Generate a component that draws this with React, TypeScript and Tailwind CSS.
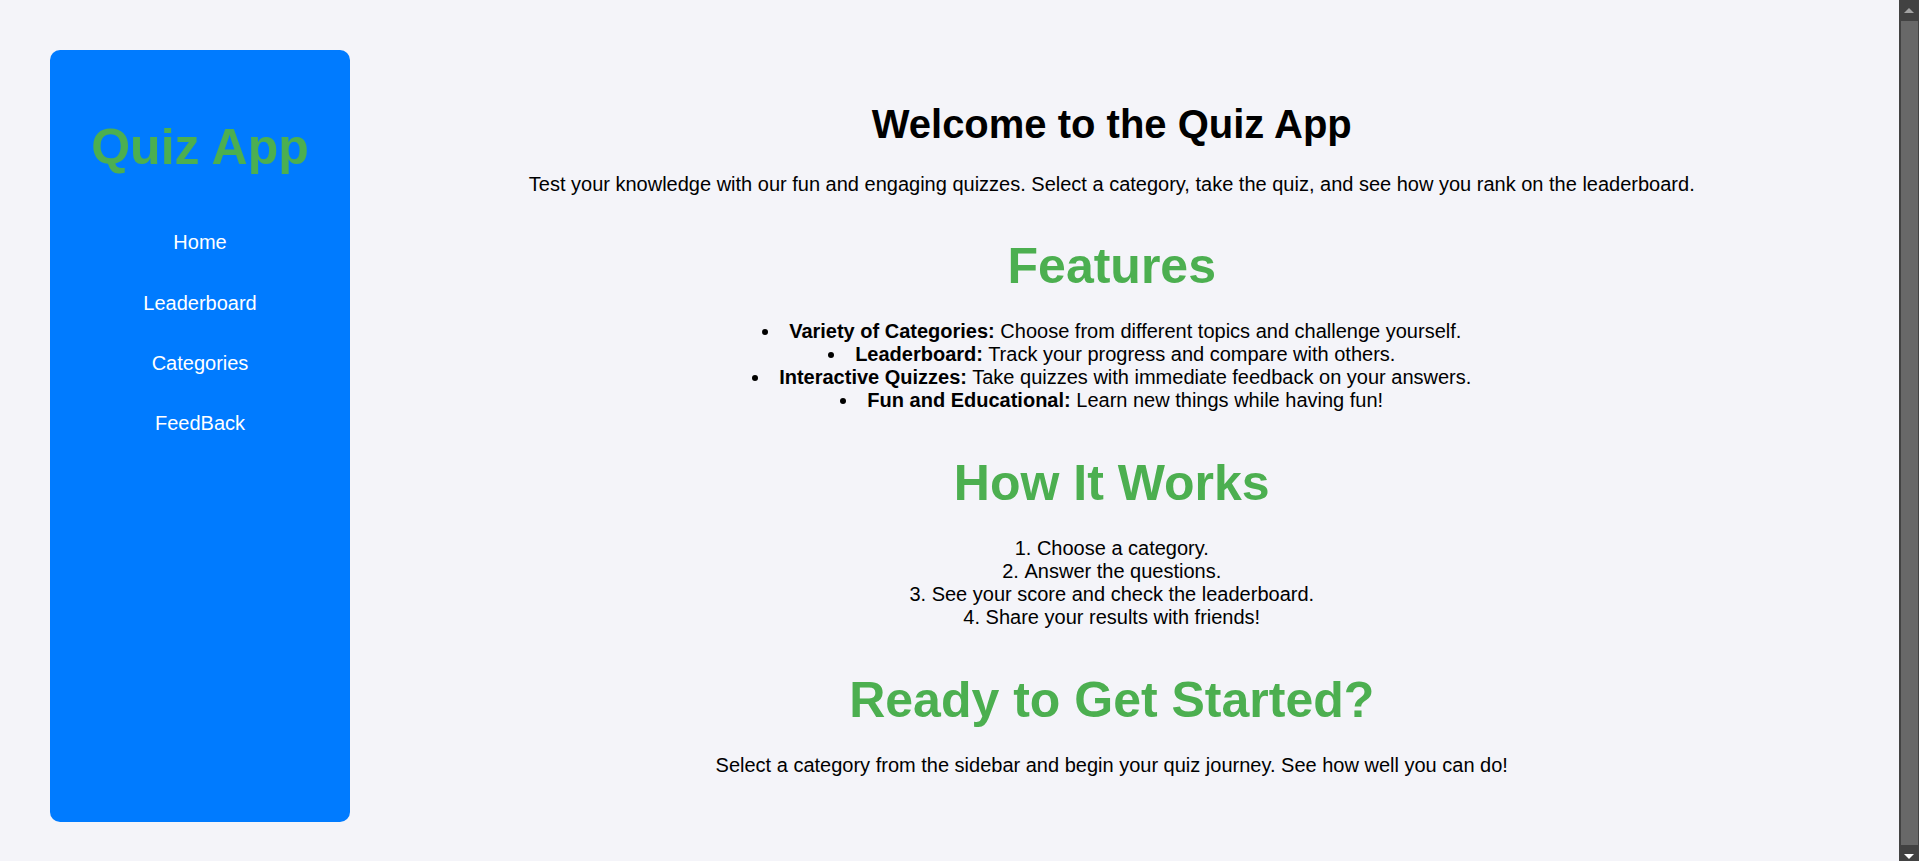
import React from 'react';

const NAV_LINKS = ['Home', 'Leaderboard', 'Categories', 'FeedBack'];

const FEATURES = [
  { title: 'Variety of Categories:', text: 'Choose from different topics and challenge yourself.' },
  { title: 'Leaderboard:', text: 'Track your progress and compare with others.' },
  { title: 'Interactive Quizzes:', text: 'Take quizzes with immediate feedback on your answers.' },
  { title: 'Fun and Educational:', text: 'Learn new things while having fun!' },
];

const STEPS = [
  'Choose a category.',
  'Answer the questions.',
  'See your score and check the leaderboard.',
  'Share your results with friends!',
];

function Sidebar() {
  return (
    <aside className="w-[300px] h-[772px] shrink-0 ml-[50px] mt-[50px] mb-[40px] rounded-[10px] bg-[#007bff] text-white">
      <h2 className="mt-[68px] text-center text-[50px] font-bold leading-[normal] text-[#4caf50]">Quiz App</h2>
      <ul className="mt-[36.5px]">
        {NAV_LINKS.map((link) => (
          <li key={link} className="h-[60.4px] flex items-center justify-center">
            <a href="#" className="text-[20px] leading-[normal] text-white">
              {link}
            </a>
          </li>
        ))}
      </ul>
    </aside>
  );
}

// window scrollbar as it shows in the screenshot
function Scrollbar() {
  return (
    <div className="fixed top-0 right-0 h-screen w-[20px] bg-[#424242] flex flex-col">
      <div className="h-[21px] flex items-center justify-center">
        <div className="w-0 h-0 border-l-[5px] border-r-[5px] border-b-[5px] border-l-transparent border-r-transparent border-b-[#a3a3a3]" />
      </div>
      <div className="flex-1 ml-[2px] mr-[1px] bg-[#686868]" />
      <div className="h-[16px] flex items-end justify-center pb-[2px]">
        <div className="w-0 h-0 border-l-[5px] border-r-[5px] border-t-[5px] border-l-transparent border-r-transparent border-t-white" />
      </div>
    </div>
  );
}

export default function App() {
  return (
    <div className="min-h-screen bg-[#f4f4f9] text-black font-['Liberation_Sans',Arial,sans-serif]">
      <div className="flex">
        <Sidebar />
        <main className="flex-1 mr-[45.5px] text-center text-[20px] leading-[normal] text-black">
          <h1 className="mt-[101.5px] text-[40px] font-bold leading-[normal]">Welcome to the Quiz App</h1>
          <p className="mt-[26.5px]">
            Test your knowledge with our fun and engaging quizzes. Select a category, take the quiz, and see how you rank on the leaderboard.
          </p>

          <h2 className="mt-[41px] text-[50px] font-bold leading-[normal] text-[#4caf50]">Features</h2>
          <ul className="mt-[25px] list-inside list-disc">
            {FEATURES.map((f) => (
              <li key={f.title}>
                <strong className="font-bold">{f.title}</strong> {f.text}
              </li>
            ))}
          </ul>

          <h2 className="mt-[42px] text-[50px] font-bold leading-[normal] text-[#4caf50]">How It Works</h2>
          <ol className="mt-[25px] list-inside list-decimal">
            {STEPS.map((s) => (
              <li key={s}>{s}</li>
            ))}
          </ol>

          <h2 className="mt-[42px] text-[50px] font-bold leading-[normal] text-[#4caf50]">Ready to Get Started?</h2>
          <p className="mt-[25px]">
            Select a category from the sidebar and begin your quiz journey. See how well you can do!
          </p>
        </main>
      </div>
      <Scrollbar />
    </div>
  );
}
